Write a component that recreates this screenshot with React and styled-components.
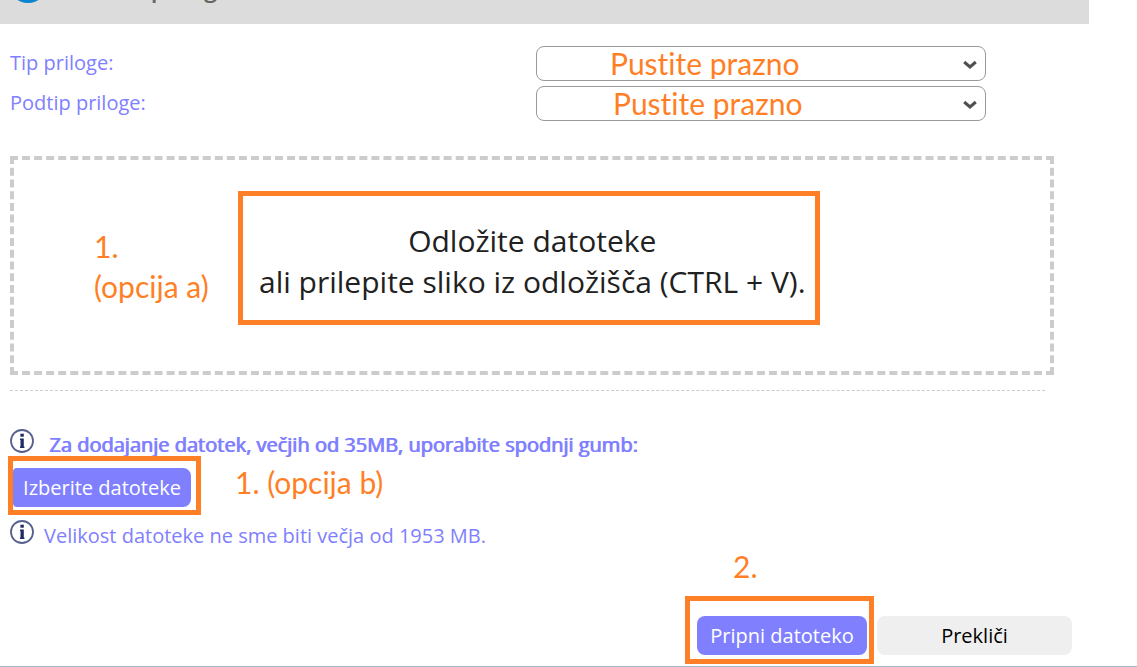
import React, { useState } from 'react';
import styled, { createGlobalStyle, css } from 'styled-components';

const color = {
  accent: '#8080ff',
  mark: '#ff7f27',
  text: '#212121',
  grey: '#dcdcdc',
  dash: '#cccccc',
};

const typeFields = [
  { id: 'type', title: 'Tip priloge:', indent: 73 },
  { id: 'subtype', title: 'Podtip priloge:', indent: 76 },
];

const GlobalStyle = createGlobalStyle`
  * {
    box-sizing: border-box;
  }

  body {
    margin: 0;
    background-color: #fff;
    color: ${color.text};
    font-family: 'Open Sans', 'Noto Sans', sans-serif;
    font-size: 20px;
    line-height: 28px;
  }
`;

const noteText = css`
  font-family: Lato, sans-serif;
  font-size: 30px;
  font-variant-ligatures: none;
  line-height: 40px;
  color: ${color.mark};
`;

const Page = styled.div`
  display: flex;
  flex-direction: column;
  min-height: 100vh;
  border-bottom: 1px solid #a9b4c4;
`;

const Header = styled.header`
  display: flex;
  align-items: flex-end;
  gap: 40px;
  height: 24px;
  margin-right: 48px;
  padding: 0 0 21px 8px;
  background-color: ${color.grey};
  overflow: hidden;
`;

const HeaderIcon = styled.svg`
  flex: none;
  width: 40px;
  height: 40px;
`;

const HeaderTitle = styled.h1`
  margin: 0;
  font-size: 24px;
  line-height: 30px;
  font-weight: 600;
  color: #666;
`;

const Main = styled.main`
  display: flex;
  flex-direction: column;
  flex: 1;
  padding: 22px 64px 0 10px;
`;

const FieldRow = styled.div`
  display: grid;
  grid-template-columns: 1fr 450px;
  align-items: center;
  margin: 0 87px 5px 0;
`;

const FieldLabel = styled.label`
  padding-bottom: 2px;
  color: ${color.accent};
`;

const SelectWrapper = styled.div`
  position: relative;
  display: flex;
`;

const Select = styled.select`
  ${noteText};
  appearance: none;
  width: 100%;
  height: 35px;
  padding: 0 32px 1px ${({ $indent }) => $indent}px;
  line-height: 32px;
  border: 1px solid #999;
  border-radius: 8px;
  background-color: #fff;
`;

const Chevron = styled.svg`
  position: absolute;
  top: 14px;
  right: 9px;
  width: 14px;
  height: 10px;
  pointer-events: none;
`;

const DropZone = styled.section`
  display: grid;
  grid-template-columns: 224px auto 1fr;
  align-items: center;
  height: 219px;
  margin: 30px 19px 0 0;
  border: 4px dashed ${color.dash};
`;

const Note = styled.p`
  ${noteText};
  margin: 0;
`;

const DropNote = styled(Note)`
  padding-left: 80px;
  white-space: nowrap;
`;

const DropText = styled.p`
  align-self: start;
  margin: 31px 0 0;
  padding: 24px 9px 18px 16px;
  border: 5px solid ${color.mark};
  font-size: 30px;
  line-height: 41px;
  text-align: center;
  white-space: nowrap;
`;

const Divider = styled.hr`
  width: calc(100% - 28px);
  margin: 15px 0 38px;
  border: 0;
  border-top: 1px dashed ${color.dash};
`;

const InfoRow = styled.div`
  display: flex;
  align-items: flex-start;
  gap: ${({ $strong }) => $strong ? '15px' : '10px'};
  color: ${color.accent};
  text-shadow: ${({ $strong }) => $strong ? `1px 0 0 ${color.accent}` : 'none'};
`;

const InfoText = styled.p`
  margin: 0;
  line-height: 32px;
`;

const InfoSvg = styled.svg`
  flex: none;
  width: 24px;
  height: 24px;
`;

const ChooseRow = styled.div`
  display: flex;
  align-items: center;
  gap: 34px;
  margin: -5px 0 5px -2px;
`;

const ChooseNote = styled(Note)`
  padding-bottom: 8px;
`;

const Highlight = styled.div`
  display: flex;
  padding: ${({ $space }) => $space};
  border: 5px solid ${color.mark};
`;

const Button = styled.button`
  width: ${({ $width }) => $width}px;
  height: 39px;
  padding: 0;
  border: 0;
  border-radius: ${({ $flush }) => $flush ? '4px 8px 8px 4px' : '8px'};
  background-color: ${({ $primary }) => $primary ? color.accent : '#efefef'};
  color: ${({ $primary }) => $primary ? '#fff' : '#000'};
  font: inherit;
  cursor: pointer;
`;

const Footer = styled.footer`
  display: flex;
  justify-content: flex-end;
  align-items: baseline;
  gap: 3px;
  margin: auto 1px 2px 0;
`;

const StepNote = styled(Note)`
  align-self: flex-end;
  width: 338px;
  margin-right: 2px;
  line-height: 28px;
`;

const InfoIcon = () => (
  <InfoSvg viewBox="0 0 24 24" aria-hidden="true">
    <circle cx="12" cy="12" r="11" fill="#fff" stroke="#56608c" strokeWidth="1.8" />
    <rect x="10.4" y="4.700" width="3.400" height="3" fill="#1d2c66" />
    <path d="M10 9.600h3.800v8h.6v1.400H10v-1.400h.5v-6.600H10z" fill="#1d2c66" />
  </InfoSvg>
);

const SelectField = ({ id, title, indent }) => {
  const [value, setValue] = useState('empty');

  return (
    <FieldRow>
      <FieldLabel htmlFor={id}>{title}</FieldLabel>
      <SelectWrapper>
        <Select id={id} $indent={indent} value={value} onChange={e => setValue(e.target.value)}>
          <option value="empty">Pustite prazno</option>
        </Select>
        <Chevron viewBox="0 0 14 10" aria-hidden="true">
          <path d="M1.200 2l5.800 5 5.800-5" fill="none" stroke="#505050" strokeWidth="3" />
        </Chevron>
      </SelectWrapper>
    </FieldRow>
  );
};

const App = () => (
  <>
    <GlobalStyle />
    <Page>
      <Header>
        <HeaderIcon viewBox="0 0 40 40" aria-hidden="true">
          <circle cx="20" cy="20" r="20" fill="#0a84cf" />
        </HeaderIcon>
        <HeaderTitle>Vnos priloge</HeaderTitle>
      </Header>
      <Main>
        {typeFields.map(field => <SelectField key={field.id} {...field} />)}
        <DropZone>
          <DropNote>1.<br />(opcija a)</DropNote>
          <DropText>
            Odložite datoteke<br />
            ali prilepite sliko iz odložišča (CTRL + V).
          </DropText>
        </DropZone>
        <Divider />
        <InfoRow $strong>
          <InfoIcon />
          <InfoText>Za dodajanje datotek, večjih od 35MB, uporabite spodnji gumb:</InfoText>
        </InfoRow>
        <ChooseRow>
          <Highlight $space="7px 5px 3px 0">
            <Button type="button" $primary $flush $width={178}>Izberite datoteke</Button>
          </Highlight>
          <ChooseNote>1. (opcija b)</ChooseNote>
        </ChooseRow>
        <InfoRow>
          <InfoIcon />
          <InfoText>Velikost datoteke ne sme biti večja od 1953 MB.</InfoText>
        </InfoRow>
        <StepNote>2.</StepNote>
        <Footer>
          <Highlight $space="15px 2px 4px 7px">
            <Button type="button" $primary $width={170}>Pripni datoteko</Button>
          </Highlight>
          <Button type="button" $width={195}>Prekliči</Button>
        </Footer>
      </Main>
    </Page>
  </>
);

export default App;
